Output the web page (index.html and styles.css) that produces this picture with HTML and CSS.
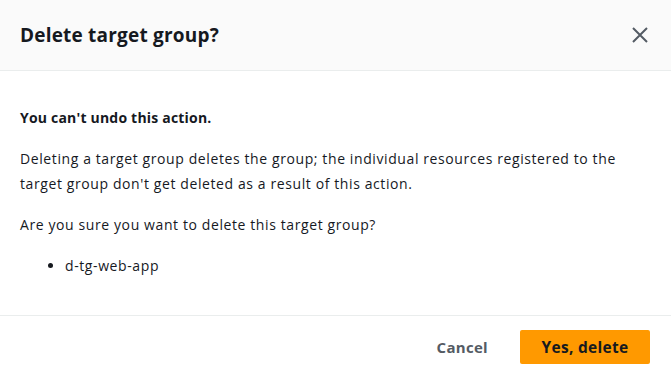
FILE: index.html
```html
<!DOCTYPE html>
<html lang="en">
<head>
  <meta charset="UTF-8">
  <title>Delete target group</title>
  <link rel="stylesheet" href="styles.css">
</head>
<body>

<div class="modal">
  <div class="modal-header">
    <h2>Delete target group?</h2>
    <button class="btn-close" aria-label="Close">
      <svg width="16" height="16" viewBox="0 0 16 16"><path d="M1 1l14 14M15 1L1 15" stroke="#545b64" stroke-width="2" fill="none"/></svg>
    </button>
  </div>

  <div class="modal-body">
    <p class="warn">You can't undo this action.</p>
    <p>Deleting a target group deletes the group; the individual resources registered to the target group don't get deleted as a result of this action.</p>
    <p>Are you sure you want to delete this target group?</p>
    <ul>
      <li>d-tg-web-app</li>
    </ul>
  </div>

  <div class="modal-footer">
    <button class="btn-cancel">Cancel</button>
    <button class="btn-delete">Yes, delete</button>
  </div>
</div>

</body>
</html>
```

FILE: styles.css
```css
body { margin: 0; font-family: "Open Sans", Arial, sans-serif; color: #16191f; background: #fff; }
.modal { width: 671px; height: 378px; display: flex; flex-direction: column; }
.modal-header { height: 71px; box-sizing: border-box; background: #fafafa; border-bottom: 1px solid #eaeded; display: flex; align-items: center; justify-content: space-between; padding: 0 20px 0 20px; }
.modal-header h2 { margin: 0; font-size: 19px; font-weight: 700; letter-spacing: 0.2px; }
.btn-close { background: none; border: none; padding: 0; width: 16px; height: 16px; cursor: pointer; margin-right: 3px; }
.modal-body { flex: 1; padding: 34px 20px 0 20px; font-size: 14px; line-height: 25px; letter-spacing: 0.6px; }
.modal-body p { margin: 0 0 16px 0; }
.modal-body .warn { font-weight: 700; letter-spacing: 0.2px; }
.modal-body ul { margin: 0; padding-left: 45px; }
.modal-footer { height: 63px; box-sizing: border-box; border-top: 1px solid #eaeded; display: flex; align-items: center; justify-content: flex-end; padding: 0 21px 0 0; gap: 12px; }
button { font-family: inherit; }
.btn-cancel { background: none; border: none; color: #545b64; font-weight: 700; font-size: 15px; letter-spacing: 0.3px; padding: 6px 20px; cursor: pointer; }
.btn-delete { background: #ff9900; border: none; border-radius: 2px; color: #16191f; font-weight: 700; font-size: 15.5px; letter-spacing: 0.3px; width: 130px; height: 34px; cursor: pointer; }
```
